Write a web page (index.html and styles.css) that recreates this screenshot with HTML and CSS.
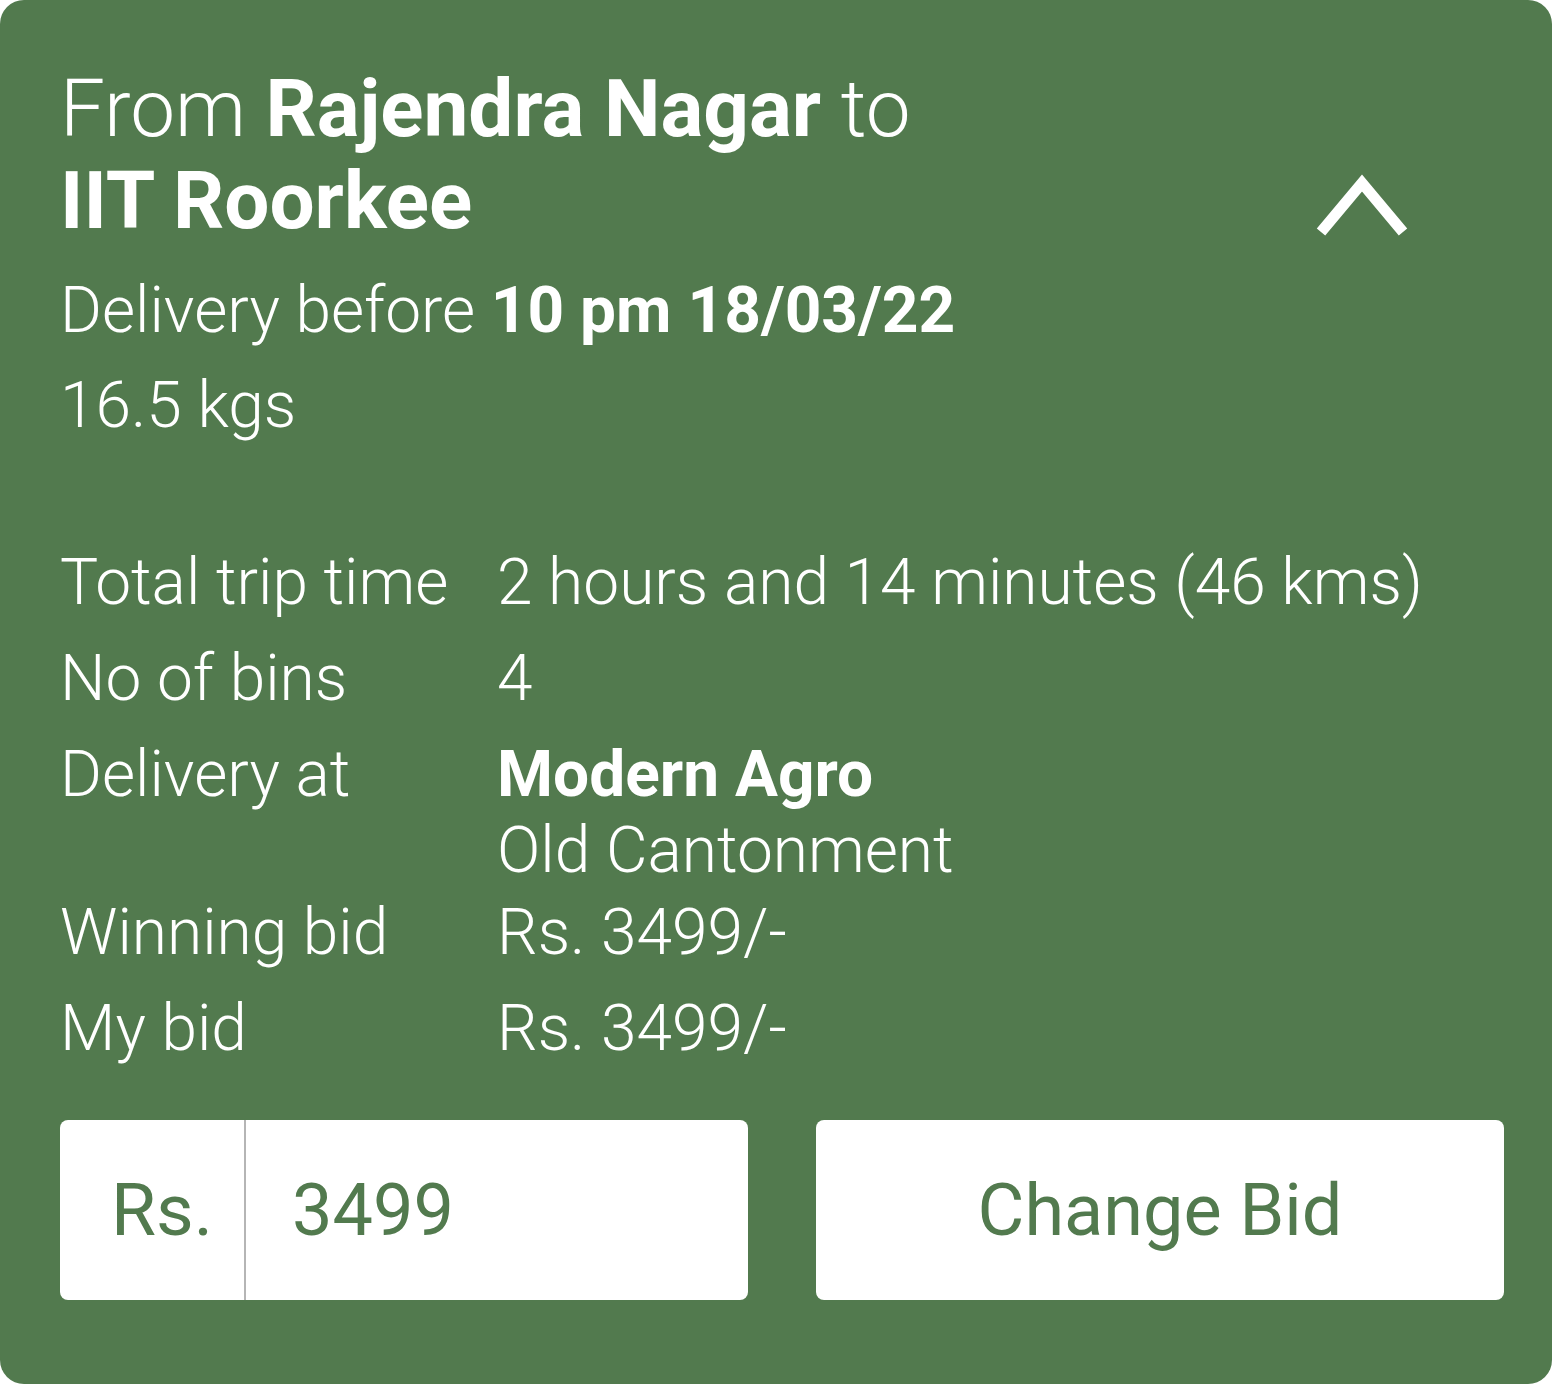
FILE: index.html
```html
<!DOCTYPE html>
<html lang="en">
<head>
<meta charset="utf-8">
<title>Bid card</title>
<link rel="stylesheet" href="styles.css">
</head>
<body>
<div class="card">
  <div class="header">
    <h1 class="route">From <b>Rajendra Nagar</b> to<br><b>IIT Roorkee</b></h1>
    <svg class="chevron" width="100" height="70" viewBox="0 0 100 70" aria-hidden="true">
      <polyline points="9,62 50,13 91,62" fill="none" stroke="#ffffff" stroke-width="11" stroke-linejoin="miter" stroke-linecap="butt"/>
    </svg>
  </div>
  <p class="meta">Delivery before <b>10 pm 18/03/22</b></p>
  <p class="meta">16.5 kgs</p>

  <div class="details">
    <div class="label">Total trip time</div>
    <div class="value">2 hours and 14 minutes (46 kms)</div>
    <div class="label">No of bins</div>
    <div class="value">4</div>
    <div class="label">Delivery at</div>
    <div class="value value-multi"><b>Modern Agro</b><br>Old Cantonment</div>
    <div class="label">Winning bid</div>
    <div class="value">Rs. 3499/-</div>
    <div class="label">My bid</div>
    <div class="value">Rs. 3499/-</div>
  </div>

  <div class="actions">
    <div class="bid-input">
      <span class="prefix">Rs.</span>
      <span class="amount">3499</span>
    </div>
    <button class="change-btn" type="button">Change Bid</button>
  </div>
</div>
</body>
</html>
```

FILE: styles.css
```css
html, body {
  margin: 0;
  padding: 0;
  background: #ffffff;
}

body {
  font-family: Roboto, "Liberation Sans", sans-serif;
  color: #ffffff;
}

.card {
  box-sizing: border-box;
  width: 1552px;
  height: 1384px;
  background: #527a4e;
  border-radius: 24px;
  padding: 63px 48px 84px 60px;
  display: flex;
  flex-direction: column;
}

.header {
  display: flex;
  align-items: flex-end;
  justify-content: space-between;
}

.route {
  margin: 0;
  font-size: 80px;
  line-height: 92px;
  font-weight: 300;
}

.route b {
  font-weight: 700;
}

.chevron {
  display: block;
  margin-right: 92px;
  margin-bottom: 7px;
}

.meta {
  margin: 0;
  font-size: 64px;
  line-height: 95px;
  font-weight: 300;
}

.header + .meta {
  margin-top: 16px;
}

.meta b {
  font-weight: 700;
}

.details {
  margin-top: 82px;
  display: grid;
  grid-template-columns: 437px 1fr;
  align-items: start;
  font-size: 64px;
  line-height: 96px;
  font-weight: 300;
}

.details b {
  font-weight: 700;
}

.value-multi {
  line-height: 76px;
  padding-top: 10px;
  margin-bottom: -4px;
}

.actions {
  margin-top: auto;
  display: grid;
  grid-template-columns: 1fr 1fr;
  column-gap: 68px;
  height: 180px;
}

.bid-input {
  display: flex;
  align-items: center;
  background: #ffffff;
  border-radius: 8px;
  color: #527a4e;
  font-size: 72px;
  font-weight: 400;
  overflow: hidden;
}

.prefix {
  box-sizing: border-box;
  width: 186px;
  height: 100%;
  display: flex;
  align-items: center;
  padding-left: 51px;
  font-size: 73px;
  border-right: 2px solid #b5b5b5;
}

.amount {
  padding-left: 46px;
}

.change-btn {
  background: #ffffff;
  border: none;
  border-radius: 8px;
  color: #527a4e;
  font-family: Roboto, "Liberation Sans", sans-serif;
  font-size: 72px;
  font-weight: 400;
  padding: 0;
  margin: 0;
  cursor: pointer;
}
```
